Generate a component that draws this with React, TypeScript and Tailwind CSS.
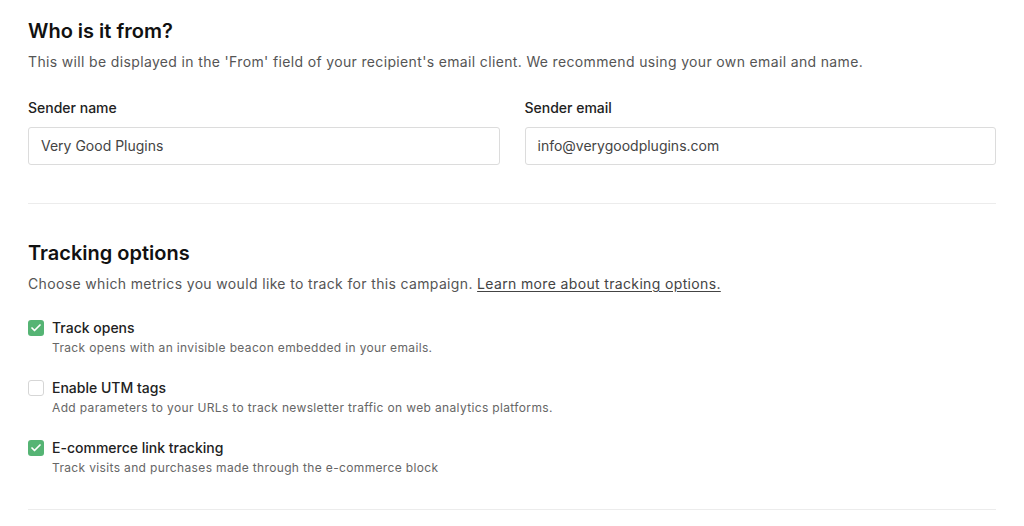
import { Check } from "lucide-react";

const options = [
  {
    title: "Track opens",
    text: "Track opens with an invisible beacon embedded in your emails.",
    checked: true,
  },
  {
    title: "Enable UTM tags",
    text: "Add parameters to your URLs to track newsletter traffic on web analytics platforms.",
    checked: false,
  },
  {
    title: "E-commerce link tracking",
    text: "Track visits and purchases made through the e-commerce block",
    checked: true,
  },
];

function Box({ checked }: { checked: boolean }) {
  if (checked) {
    return (
      <span className="flex h-4 w-4 shrink-0 items-center justify-center rounded-[3px] bg-[#55b474]">
        <Check className="h-3 w-3 text-white" strokeWidth={3.5} />
      </span>
    );
  }
  return <span className="h-4 w-4 shrink-0 rounded-[3px] border border-[#d6d6d6] bg-white" />;
}

export default function App() {
  return (
    <main className="min-h-screen bg-white px-[28px] pt-[17px] text-[#1a1a1a] font-['Inter',sans-serif]">
      <section>
        <h2 className="text-[20px] font-semibold leading-7 text-[#111]">Who is it from?</h2>
        <p className="mt-[7px] text-sm leading-5 tracking-[0.35px] text-[#555]">
          This will be displayed in the 'From' field of your recipient's email client. We recommend using your own email and name.
        </p>
        <div className="mt-[26px] grid grid-cols-2 gap-[25px]">
          <label className="block">
            <span className="block text-sm font-medium leading-5 text-[#222]">Sender name</span>
            <div className="mt-[9px] flex h-[38px] items-center rounded-[3px] border border-[#dcdcdc] px-3 text-sm text-[#444]">
              Very Good Plugins
            </div>
          </label>
          <label className="block">
            <span className="block text-sm font-medium leading-5 text-[#222]">Sender email</span>
            <div className="mt-[9px] flex h-[38px] items-center rounded-[3px] border border-[#dcdcdc] px-3 text-sm text-[#444]">
              info@verygoodplugins.com
            </div>
          </label>
        </div>
      </section>

      <div className="mt-[38px] h-px bg-[#ececec]" />

      <section className="mt-[35px]">
        <h2 className="text-[20px] font-semibold leading-7 text-[#111]">Tracking options</h2>
        <p className="mt-[7px] text-sm leading-5 tracking-[0.35px] text-[#555]">
          Choose which metrics you would like to track for this campaign.{" "}
          <a className="text-[#444] underline underline-offset-2">Learn more about tracking options.</a>
        </p>
        <div className="mt-[24px] space-y-5">
          {options.map((o) => (
            <div key={o.title} className="flex gap-2">
              <div className="flex h-5 items-center">
                <Box checked={o.checked} />
              </div>
              <div>
                <p className="text-sm font-medium leading-5 text-[#222]">{o.title}</p>
                <p className="text-xs leading-5 tracking-[0.35px] text-[#666]">{o.text}</p>
              </div>
            </div>
          ))}
        </div>
      </section>

      <div className="mt-[31px] h-px bg-[#ececec]" />
    </main>
  );
}
